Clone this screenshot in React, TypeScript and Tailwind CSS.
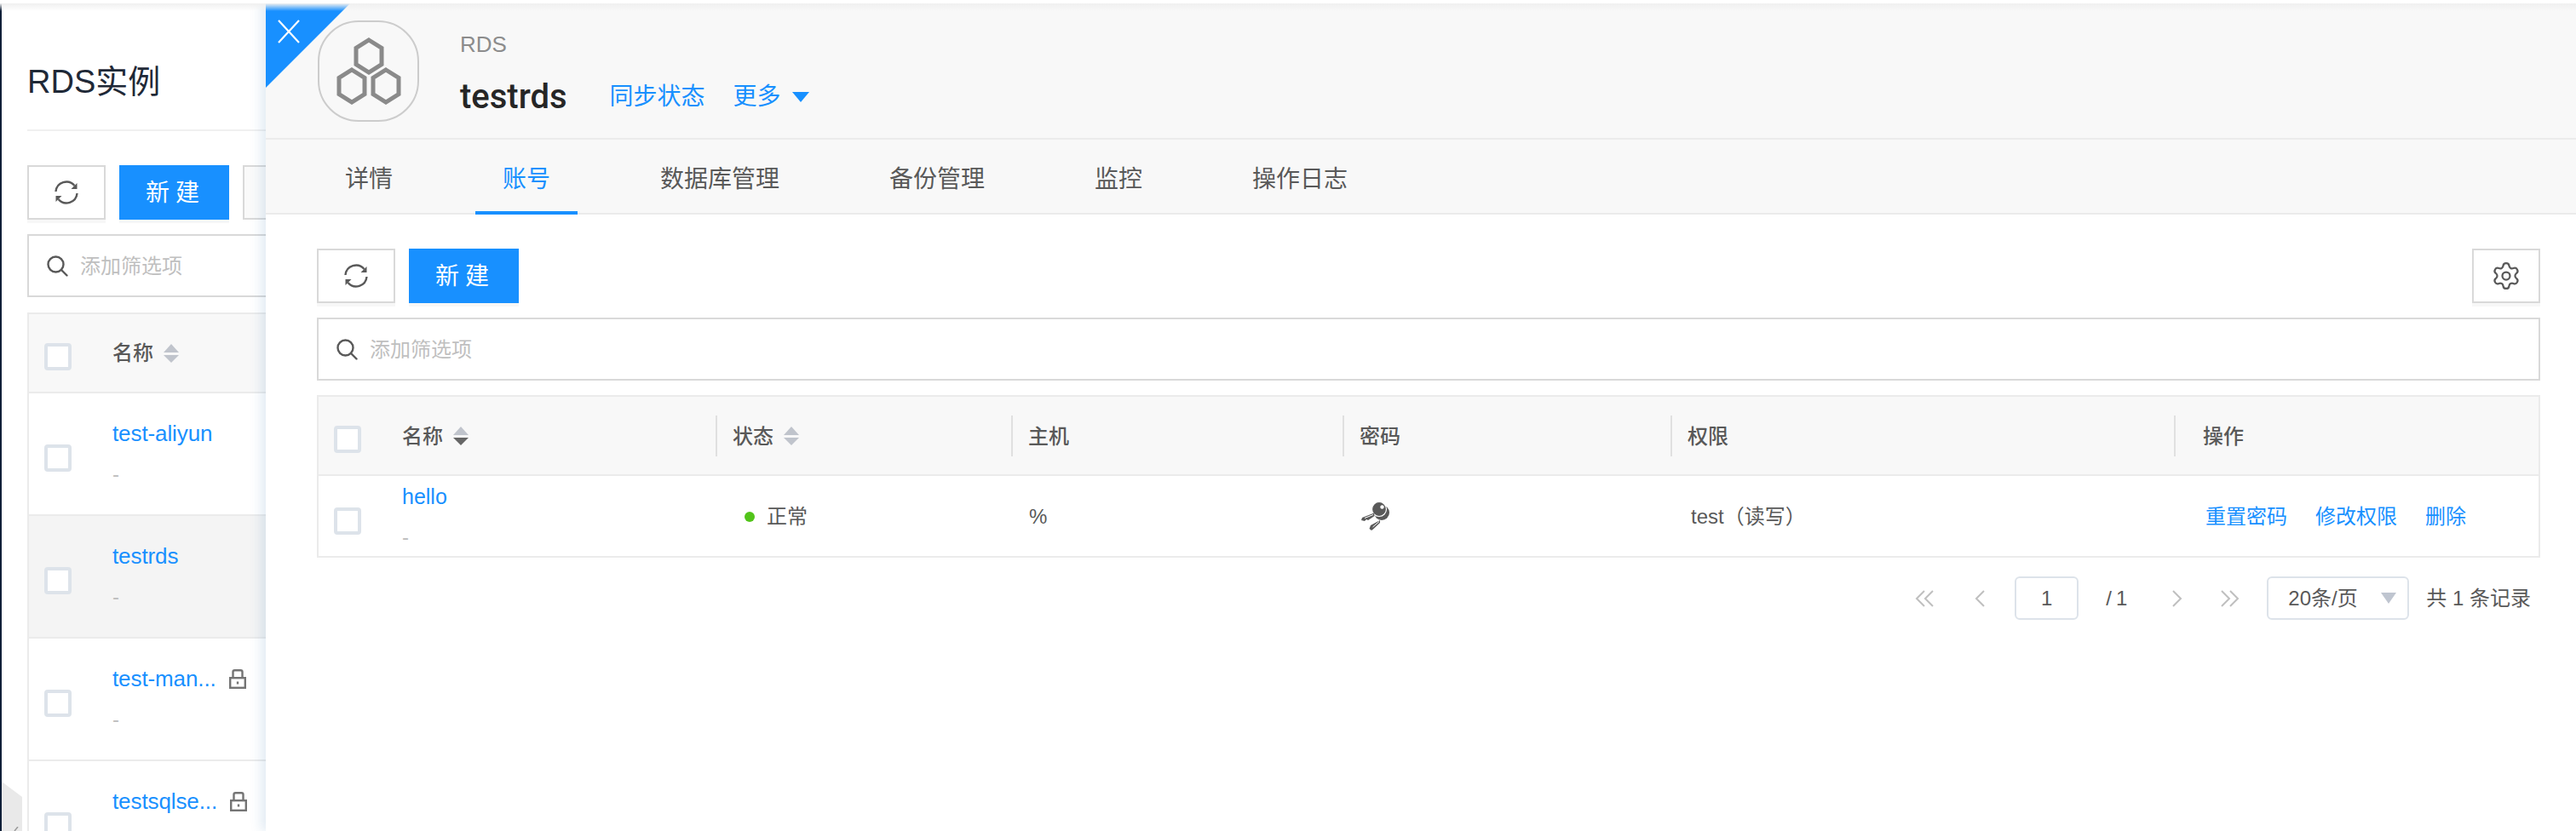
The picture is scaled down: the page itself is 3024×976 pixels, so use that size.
import { Settings } from "lucide-react";

const blue = "text-[#1890ff]";

function Refresh() {
  return (
    <svg width="28" height="28" viewBox="0 0 28 28" fill="none" stroke="#595959" strokeWidth="2.400">
      <path d="M1.500 13 A12.500 12.500 0 0 1 23.500 6" />
      <path d="M26.500 15 A12.500 12.500 0 0 1 4.500 22" />
      <path d="M26.500 3 L26.500 10 L19.500 10 Z" fill="#595959" stroke="none" />
      <path d="M1.500 25 L1.500 18 L8.500 18 Z" fill="#595959" stroke="none" />
    </svg>
  );
}

function Search() {
  return (
    <svg width="25" height="25" viewBox="0 0 25 25" fill="none" stroke="#595959" strokeWidth="2.400" strokeLinecap="round">
      <circle cx="10.500" cy="10.500" r="9" />
      <path d="M17 17 L23.500 23.500" />
    </svg>
  );
}

function Sort({ down }: { down?: boolean }) {
  return (
    <svg width="18" height="22" viewBox="0 0 18 22">
      <path d="M9 0 L18 10 L0 10 Z" fill="#c0c4cc" />
      <path d="M0 13 L18 13 L9 22 Z" fill={down ? "#666666" : "#c0c4cc"} />
    </svg>
  );
}

function Check() {
  return <span className="block mt-[9px] w-[32px] h-[32px] shrink-0 rounded-[4px] border-[4px] border-[#dde3ea] bg-white" />;
}

function Lock() {
  return (
    <svg width="20" height="23" viewBox="0 0 20 23" fill="none" stroke="#747474" strokeWidth="2.400">
      <path d="M4.500 10 V3 Q4.500 1.200 6.500 1.200 H13.500 Q15.500 1.200 15.500 3 V10" />
      <rect x="1.200" y="10.200" width="17.600" height="11.600" />
      <path d="M10 14.500 V17.500" />
    </svg>
  );
}

function Key() {
  return (
    <svg width="38" height="38" viewBox="0 0 38 38">
      <circle cx="27" cy="14" r="9" fill="#595959" />
      <circle cx="24" cy="10" r="8.500" fill="#595959" stroke="#ffffff" strokeWidth="1.200" />
      <circle cx="27.500" cy="7.500" r="2.200" fill="#ffffff" />
      <path d="M18 14.500 L4 20 L3 23 L7 24 L9 22 L11 23 L18.500 18 Z" fill="#595959" />
      <path d="M7 20.500 L17 16.500" stroke="#ffffff" strokeWidth="1" />
      <path d="M25 23 L14 29 L12.500 33 L15 35 L17 33.500 L25 26 Z" fill="#595959" />
      <path d="M16.500 31 L24 24.500" stroke="#ffffff" strokeWidth="1" />
    </svg>
  );
}

function Hex({ x, y }: { x: number; y: number }) {
  const p = [
    [x + 15, y],
    [x + 30, y + 9.500],
    [x + 30, y + 28.500],
    [x + 15, y + 38],
    [x, y + 28.500],
    [x, y + 9.500],
  ]
    .map((c) => c.join(","))
    .join(" ");
  return <polygon points={p} fill="none" stroke="#8a8a8a" strokeWidth="5" />;
}

function Chevron({ dir, double }: { dir: "l" | "r"; double?: boolean }) {
  const one = dir === "l" ? "M11 1 L2 10 L11 19" : "M1 1 L10 10 L1 19";
  const two = dir === "l" ? "M21 1 L12 10 L21 19" : "M11 1 L20 10 L11 19";
  return (
    <svg width={double ? 23 : 12} height="20" viewBox={double ? "0 0 23 20" : "0 0 12 20"} fill="none" stroke="#bfbfbf" strokeWidth="2">
      <path d={one} />
      {double && <path d={two} />}
    </svg>
  );
}

function Toolbar() {
  return (
    <div className="flex gap-[16px] shrink-0">
      <button className="w-[92px] h-[64px] flex items-center justify-center border-2 border-[#d9d9d9] bg-white shadow-[0_4px_0_#f7f7f7]">
        <Refresh />
      </button>
      <button className="w-[129px] h-[64px] pt-[2px] pl-[3px] bg-[#1890ff] text-white text-[28px] leading-[40px] tracking-[7px] shadow-[0_4px_0_#f7f7f7]">
        新建
      </button>
    </div>
  );
}

function Filter() {
  return (
    <div className="h-[74px] flex items-center pl-[21px] gap-[14px] border-2 border-[#d9d9d9] bg-white">
      <Search />
      <span className="pt-[2px] text-[24px] leading-[34px] text-[#bfbfbf]">添加筛选项</span>
    </div>
  );
}

const leftRows = [
  { name: "test-aliyun", lock: false, active: false, dash: true },
  { name: "testrds", lock: false, active: true, dash: true },
  { name: "test-man...", lock: true, active: false, dash: true },
  { name: "testsqlse...", lock: true, active: false, dash: false },
];

function LeftPanel() {
  return (
    <div className="w-[312px] shrink-0 h-full overflow-hidden pl-[30px] border-l-2 border-[#0f1f38] bg-white">
      <div className="h-[154px] w-[400px] pt-[74px] border-b-2 border-[#f0f0f0]">
        <h1 className="pt-[2px] text-[38px] leading-[40px] text-[#1f2937] font-normal">RDS实例</h1>
      </div>
      <div className="w-[400px] mt-[40px] flex gap-[16px]">
        <Toolbar />
        <div className="w-[92px] h-[64px] border-2 border-[#d9d9d9] bg-[#fafafa]" />
      </div>
      <div className="w-[400px] mt-[17px]">
        <Filter />
      </div>
      <div className="w-[400px] mt-[18px] border-2 border-[#ebebeb]">
        <div className="h-[93px] flex items-center pl-[18px] bg-[#f8f8f8] border-b-2 border-[#ebebeb]">
          <Check />
          <span className="ml-[48px] text-[24px] leading-[34px] text-[#595959] font-medium">名称</span>
          <span className="ml-[12px]">
            <Sort />
          </span>
        </div>
        {leftRows.map((r) => (
          <div
            key={r.name}
            className={`h-[144px] flex items-center pl-[18px] border-b-2 border-[#ebebeb] ${r.active ? "bg-[#f4f4f4]" : "bg-white"}`}
          >
            <Check />
            <div className="ml-[48px] h-[82px]">
              <div className="flex items-center gap-[15px] h-[34px]">
                <span className={`text-[26px] tracking-[-0.1px] leading-[34px] ${blue}`}>{r.name}</span>
                {r.lock && <Lock />}
              </div>
              {r.dash && <div className="mt-[14px] text-[24px] leading-[34px] text-[#bfbfbf]">-</div>}
            </div>
          </div>
        ))}
      </div>
    </div>
  );
}

const tabs = ["详情", "账号", "数据库管理", "备份管理", "监控", "操作日志"];

function Tabs() {
  return (
    <div className="h-[88px] shrink-0 flex gap-[65px] pl-[61px] bg-[#f8f8f8] border-b-2 border-[#ebebeb]">
      {tabs.map((t) => (
        <div
          key={t}
          className={`h-[88px] px-[32px] pt-[27px] text-[28px] leading-[40px] ${t === "账号" ? `${blue} border-b-4 border-[#1890ff]` : "text-[#595959]"}`}
        >
          {t}
        </div>
      ))}
    </div>
  );
}

function Head({ w, label, sort, down }: { w: string; label: string; sort?: boolean; down?: boolean }) {
  return (
    <div className={`${w} flex items-center`}>
      <span className="w-[2px] h-[48px] bg-[#e0e0e0]" />
      <span className={`${label === "操作" ? "ml-[32px]" : "ml-[18px]"} pt-[2px] text-[24px] leading-[34px] text-[#595959] font-medium`}>{label}</span>
      {sort && (
        <span className="ml-[12px]">
          <Sort down={down} />
        </span>
      )}
    </div>
  );
}

function AccountTable() {
  return (
    <div className="mt-[17px] border-2 border-[#ebebeb]">
      <div className="h-[93px] flex items-center pl-[18px] bg-[#f8f8f8] border-b-2 border-[#ebebeb]">
        <div className="w-[448px] flex items-center">
          <Check />
          <span className="ml-[48px] pt-[2px] text-[24px] leading-[34px] text-[#595959] font-medium">名称</span>
          <span className="ml-[12px]">
            <Sort down />
          </span>
        </div>
        <Head w="w-[347px]" label="状态" sort />
        <Head w="w-[389px]" label="主机" />
        <Head w="w-[385px]" label="密码" />
        <Head w="w-[591px]" label="权限" />
        <Head w="w-[428px]" label="操作" />
      </div>
      <div className="h-[94px] flex items-center pl-[18px] pt-[2px] bg-white text-[24px] leading-[34px] text-[#595959]">
        <div className="w-[448px] flex items-center">
          <Check />
          <div className="ml-[48px]">
            <div className={`text-[25px] leading-[34px] ${blue}`}>hello</div>
            <div className="mt-[14px] text-[#bfbfbf]">-</div>
          </div>
        </div>
        <div className="w-[347px] flex items-center pl-[34px]">
          <span className="w-[12px] h-[12px] rounded-full bg-[#52c41a]" />
          <span className="ml-[14px]">正常</span>
        </div>
        <div className="w-[389px] pl-[21px]">%</div>
        <div className="w-[385px] pl-[19px]">
          <Key />
        </div>
        <div className="w-[591px] pl-[24px]">test（读写）</div>
        <div className={`w-[428px] pl-[37px] flex gap-[33px] ${blue}`}>
          <span>重置密码</span>
          <span>修改权限</span>
          <span>删除</span>
        </div>
      </div>
    </div>
  );
}

function Pagination() {
  return (
    <div className="mt-[22px] h-[51px] flex items-center justify-end pr-[11px] text-[24px] leading-[34px] text-[#595959]">
      <Chevron dir="l" double />
      <span className="ml-[47px]">
        <Chevron dir="l" />
      </span>
      <div className="ml-[35px] w-[75px] h-[51px] flex items-center justify-center rounded-[6px] border-2 border-[#dde3ea]">1</div>
      <span className="ml-[32px] flex gap-[5px]">
        <span>/</span>
        <span>1</span>
      </span>
      <span className="ml-[53px]">
        <Chevron dir="r" />
      </span>
      <span className="ml-[45px]">
        <Chevron dir="r" double />
      </span>
      <div className="ml-[31px] w-[167px] h-[51px] flex items-center pl-[23px] rounded-[6px] border-2 border-[#dde3ea]">
        <span>20条/页</span>
        <span className="ml-[27px] w-0 h-0 border-x-[9px] border-x-transparent border-t-[13px] border-t-[#bfc5d0]" />
      </div>
      <span className="ml-[20px]">共 1 条记录</span>
    </div>
  );
}

function Drawer() {
  return (
    <div className="relative z-10 flex-1 h-full flex flex-col bg-white shadow-[-6px_0_12px_rgba(40,110,170,0.13)]">
      {/* corner close */}
      <div className="absolute left-0 top-[4px] w-[99px] h-[99px] bg-[#1890ff] [clip-path:polygon(0_0,100%_0,0_100%)]">
        <svg className="absolute left-[14px] top-[19px]" width="26" height="28" viewBox="0 0 26 28" stroke="#ffffff" strokeWidth="2.200">
          <path d="M1 1 L25 27 M25 1 L1 27" />
        </svg>
      </div>

      <div className="h-[164px] shrink-0 flex pl-[61px] pt-[24px] bg-[#f8f8f8] border-b-2 border-[#ebebeb]">
        <div className="w-[119px] h-[119px] flex items-center justify-center rounded-[48px] border-2 border-[#cccccc]">
          <svg width="80" height="84" viewBox="0 0 80 84">
            <Hex x={25} y={5} />
            <Hex x={5} y={40} />
            <Hex x={45} y={40} />
          </svg>
        </div>
        <div className="ml-[48px]">
          <div className="mt-[10px] text-[26px] leading-[36px] text-[#8c8c8c]">RDS</div>
          <div className="mt-[22px] flex items-center h-[44px]">
            <span className="text-[40px] leading-[44px] font-['Roboto'] font-medium text-[#262626]">testrds</span>
            <span className={`ml-[50px] text-[28px] leading-[40px] ${blue}`}>同步状态</span>
            <span className={`ml-[33px] text-[28px] leading-[40px] ${blue}`}>更多</span>
            <span className="ml-[13px] w-0 h-0 border-x-[10px] border-x-transparent border-t-[12px] border-t-[#1890ff]" />
          </div>
        </div>
      </div>

      <Tabs />

      <div className="pl-[60px] pr-[42px] pt-[40px]">
        <div className="flex justify-between">
          <Toolbar />
          <button className="w-[80px] h-[64px] flex items-center justify-center border-2 border-[#d9d9d9] bg-white shadow-[0_4px_0_#f7f7f7]">
            <Settings size={36} color="#595959" strokeWidth={1.5} />
          </button>
        </div>
        <div className="mt-[17px]">
          <Filter />
        </div>
        <AccountTable />
        <Pagination />
      </div>
    </div>
  );
}

export default function App() {
  return (
    <div className="relative w-[3024px] h-[976px] overflow-hidden flex bg-white font-['Liberation_Sans','Noto_Sans_CJK_SC',sans-serif]">
      <LeftPanel />
      <Drawer />
      {/* collapse handle of the page behind */}
      <div className="absolute left-[2px] bottom-0 w-[24px] h-[58px] bg-[#e9e9e9] [clip-path:polygon(0_0,100%_31%,100%_100%,0_100%)]">
        <svg className="absolute left-[14px] bottom-0" width="6" height="5" viewBox="0 0 6 5" fill="none" stroke="#9a9a9a" strokeWidth="1.500">
          <path d="M5 0 L1 5" />
        </svg>
      </div>
      {/* top fade */}
      <div className="absolute left-0 right-0 top-0 z-20 h-[4px] bg-white" />
      <div className="absolute left-0 right-0 top-[4px] z-20 h-[9px] bg-gradient-to-b from-[#f0f0f0] to-transparent" />
    </div>
  );
}
